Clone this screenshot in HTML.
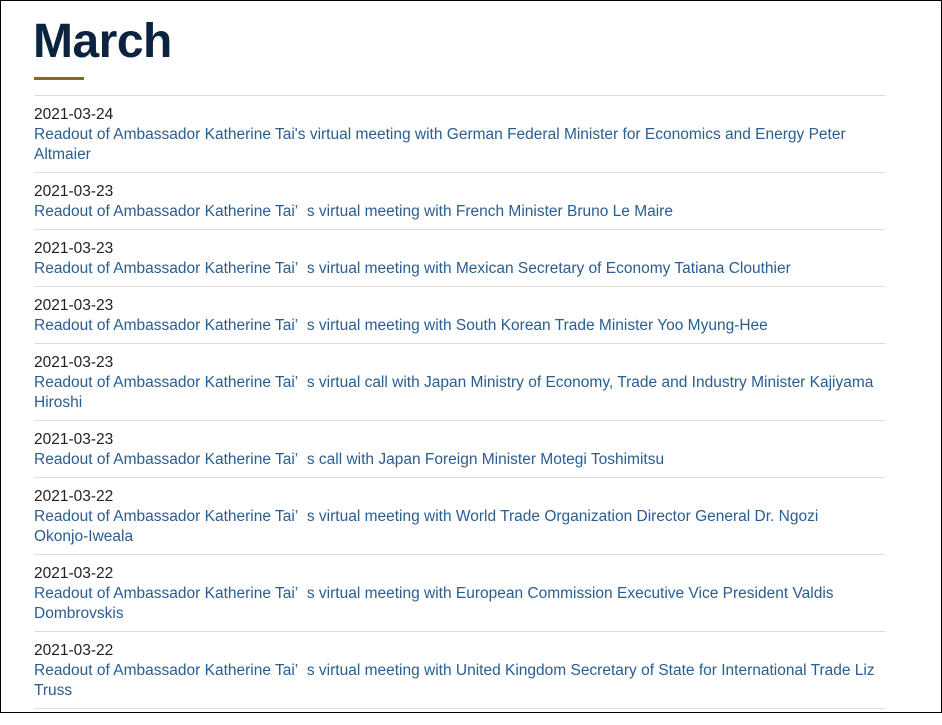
<!DOCTYPE html>
<html><head><style>
html,body{margin:0;padding:0}
body{width:940px;height:711px;border:1px solid #000;background:#fff;overflow:hidden;font-family:"Liberation Sans","Noto Sans CJK SC",sans-serif;font-size:15.5px;position:relative}
h1{position:absolute;left:32px;top:11px;margin:0;font-size:48px;font-weight:bold;color:#0c2340;letter-spacing:-0.5px;line-height:60px}
.bar{position:absolute;left:33px;top:76px;width:50px;height:3px;background:#8a6a12}
ul{position:absolute;left:33px;top:94px;width:851px;margin:0;padding:0;list-style:none}
li{border-top:1px solid #ddd;padding:9px 0 7px;line-height:20px;white-space:nowrap}
.d{color:#222}
a{color:#2a5d90;text-decoration:none}
</style></head><body>
<h1>March</h1><div class="bar"></div>
<ul>
<li><div class="d">2021-03-24</div><a>Readout of Ambassador Katherine Tai's virtual meeting with German Federal Minister for Economics and Energy Peter<br>Altmaier</a></li>
<li><div class="d">2021-03-23</div><a>Readout of Ambassador Katherine Tai’&nbsp;&nbsp;s virtual meeting with French Minister Bruno Le Maire</a></li>
<li><div class="d">2021-03-23</div><a>Readout of Ambassador Katherine Tai’&nbsp;&nbsp;s virtual meeting with Mexican Secretary of Economy Tatiana Clouthier</a></li>
<li><div class="d">2021-03-23</div><a>Readout of Ambassador Katherine Tai’&nbsp;&nbsp;s virtual meeting with South Korean Trade Minister Yoo Myung-Hee</a></li>
<li><div class="d">2021-03-23</div><a>Readout of Ambassador Katherine Tai’&nbsp;&nbsp;s virtual call with Japan Ministry of Economy, Trade and Industry Minister Kajiyama<br>Hiroshi</a></li>
<li><div class="d">2021-03-23</div><a>Readout of Ambassador Katherine Tai’&nbsp;&nbsp;s call with Japan Foreign Minister Motegi Toshimitsu</a></li>
<li><div class="d">2021-03-22</div><a>Readout of Ambassador Katherine Tai’&nbsp;&nbsp;s virtual meeting with World Trade Organization Director General Dr. Ngozi<br>Okonjo-Iweala</a></li>
<li><div class="d">2021-03-22</div><a>Readout of Ambassador Katherine Tai’&nbsp;&nbsp;s virtual meeting with European Commission Executive Vice President Valdis<br>Dombrovskis</a></li>
<li><div class="d">2021-03-22</div><a>Readout of Ambassador Katherine Tai’&nbsp;&nbsp;s virtual meeting with United Kingdom Secretary of State for International Trade Liz<br>Truss</a></li>
<li></li>
</ul>
</body></html>
